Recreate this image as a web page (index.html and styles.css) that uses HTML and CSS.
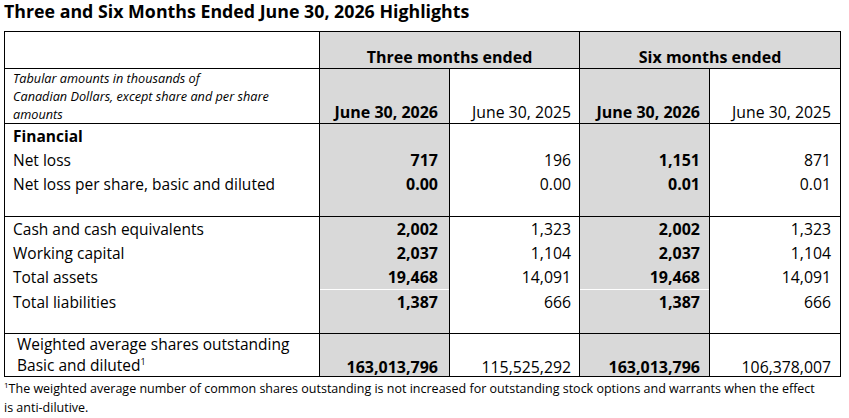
FILE: index.html
```html
<!DOCTYPE html>
<html lang="en">
<head>
<meta charset="utf-8">
<title>Highlights</title>
<link rel="stylesheet" href="styles.css">
</head>
<body>
<h1 class="title">Three and Six Months Ended June 30, 2026 Highlights</h1>
<table class="hl">
  <colgroup>
    <col class="c-label"><col class="c-num"><col class="c-num"><col class="c-num"><col class="c-last">
  </colgroup>
  <tr class="r-head">
    <th></th>
    <th colspan="2" class="grey">Three months ended</th>
    <th colspan="2" class="grey">Six months ended</th>
  </tr>
  <tr class="r-dates">
    <td class="note">Tabular amounts in thousands of<br>Canadian Dollars, except share and per share<br>amounts</td>
    <td class="grey b">June 30, 2026</td>
    <td>June 30, 2025</td>
    <td class="grey b">June 30, 2026</td>
    <td>June 30, 2025</td>
  </tr>
  <tr class="row sec first">
    <td class="lbl b">Financial</td><td class="grey"></td><td></td><td class="grey"></td><td></td>
  </tr>
  <tr class="row">
    <td class="lbl">Net loss</td><td class="grey b">717</td><td>196</td><td class="grey b">1,151</td><td>871</td>
  </tr>
  <tr class="row">
    <td class="lbl">Net loss per share, basic and diluted</td><td class="grey b">0.00</td><td>0.00</td><td class="grey b">0.01</td><td>0.01</td>
  </tr>
  <tr class="gap"><td></td><td class="grey"></td><td></td><td class="grey"></td><td></td></tr>
  <tr class="row sec">
    <td class="lbl">Cash and cash equivalents</td><td class="grey b">2,002</td><td>1,323</td><td class="grey b">2,002</td><td>1,323</td>
  </tr>
  <tr class="row">
    <td class="lbl">Working capital</td><td class="grey b">2,037</td><td>1,104</td><td class="grey b">2,037</td><td>1,104</td>
  </tr>
  <tr class="row">
    <td class="lbl">Total assets</td><td class="grey b">19,468</td><td>14,091</td><td class="grey b">19,468</td><td>14,091</td>
  </tr>
  <tr class="row split">
    <td class="lbl">Total liabilities</td><td class="grey b">1,387</td><td>666</td><td class="grey b">1,387</td><td>666</td>
  </tr>
  <tr class="gap2"><td></td><td class="grey"></td><td></td><td class="grey"></td><td></td></tr>
  <tr class="r-shares sec">
    <td class="lbl">Weighted average shares outstanding<br>Basic and diluted<sup>1</sup></td>
    <td class="grey b">163,013,796</td><td>115,525,292</td><td class="grey b">163,013,796</td><td>106,378,007</td>
  </tr>
</table>
<p class="foot"><sup>1</sup>The weighted average number of common shares outstanding is not increased for outstanding stock options and warrants when the effect<br>is anti-dilutive.</p>
</body>
</html>
```

FILE: styles.css
```css
html, body {
  margin: 0;
  padding: 0;
  background: #fff;
}
body {
  padding: 0 4px;
  font-family: "Open Sans", "Noto Sans", sans-serif;
  color: #000;
}
.title {
  margin: 0;
  font-size: 17.8px;
  line-height: 22px;
  padding-bottom: 9px;
  font-weight: 700;
}
.hl {
  border-collapse: collapse;
  table-layout: fixed;
  width: 837px;
  border: 1px solid #000;
  font-size: 15.8px;
}
.c-label { width: 315px; }
.c-num { width: 130px; }
.c-last { width: 131px; }
.hl th, .hl td {
  border-left: 1px solid #000;
  border-right: 1px solid #000;
  padding: 0;
}
.grey { background: #d9d9d9; }
.b { font-weight: 700; font-size: 16px; }
.r-head th {
  height: 35px;
  vertical-align: bottom;
  text-align: center;
  font-weight: 700;
  font-size: 16px;
  padding-bottom: 1px;
  line-height: 20px;
  border-bottom: 1px solid #000;
}
.r-dates td {
  height: 51px;
  vertical-align: bottom;
  text-align: right;
  padding: 0 8px 1px 0;
  line-height: 20px;
  border-bottom: 1px solid #000;
}
.r-dates td.note {
  text-align: left;
  font-style: italic;
  font-size: 12.7px;
  line-height: 18px;
  padding: 0 0 0 8px;
}
.row td {
  height: 24px;
  line-height: 24px;
  text-align: right;
  padding-right: 8px;
  vertical-align: middle;
}
.hl td:nth-child(2) { padding-right: 11px; }
.hl td:nth-child(4), .hl td:nth-child(5) { padding-right: 9px; }
.row td.lbl { text-align: left; padding-left: 8px; padding-right: 0; font-size: 15.5px; }
.sec td { border-top: 1px solid #000; }
.first td { height: 22px; }
.gap td { height: 20px; }
.gap2 td { height: 19px; }
.split td.grey { border-top: 1px solid #fff; }
.r-shares td {
  height: 40px;
  vertical-align: bottom;
  text-align: right;
  padding: 0 8px 0 0;
  line-height: 18px;
}
.r-shares td.lbl {
  text-align: left;
  padding-left: 12px;
  padding-right: 0;
  font-size: 15.5px;
  line-height: 21px;
}
sup { font-size: 9px; line-height: 0; vertical-align: 6px; }
.foot {
  margin: 2px 0 0;
  font-size: 12.5px;
  line-height: 19px;
  white-space: nowrap;
}
.foot sup { font-size: 8px; vertical-align: 5px; }
```
